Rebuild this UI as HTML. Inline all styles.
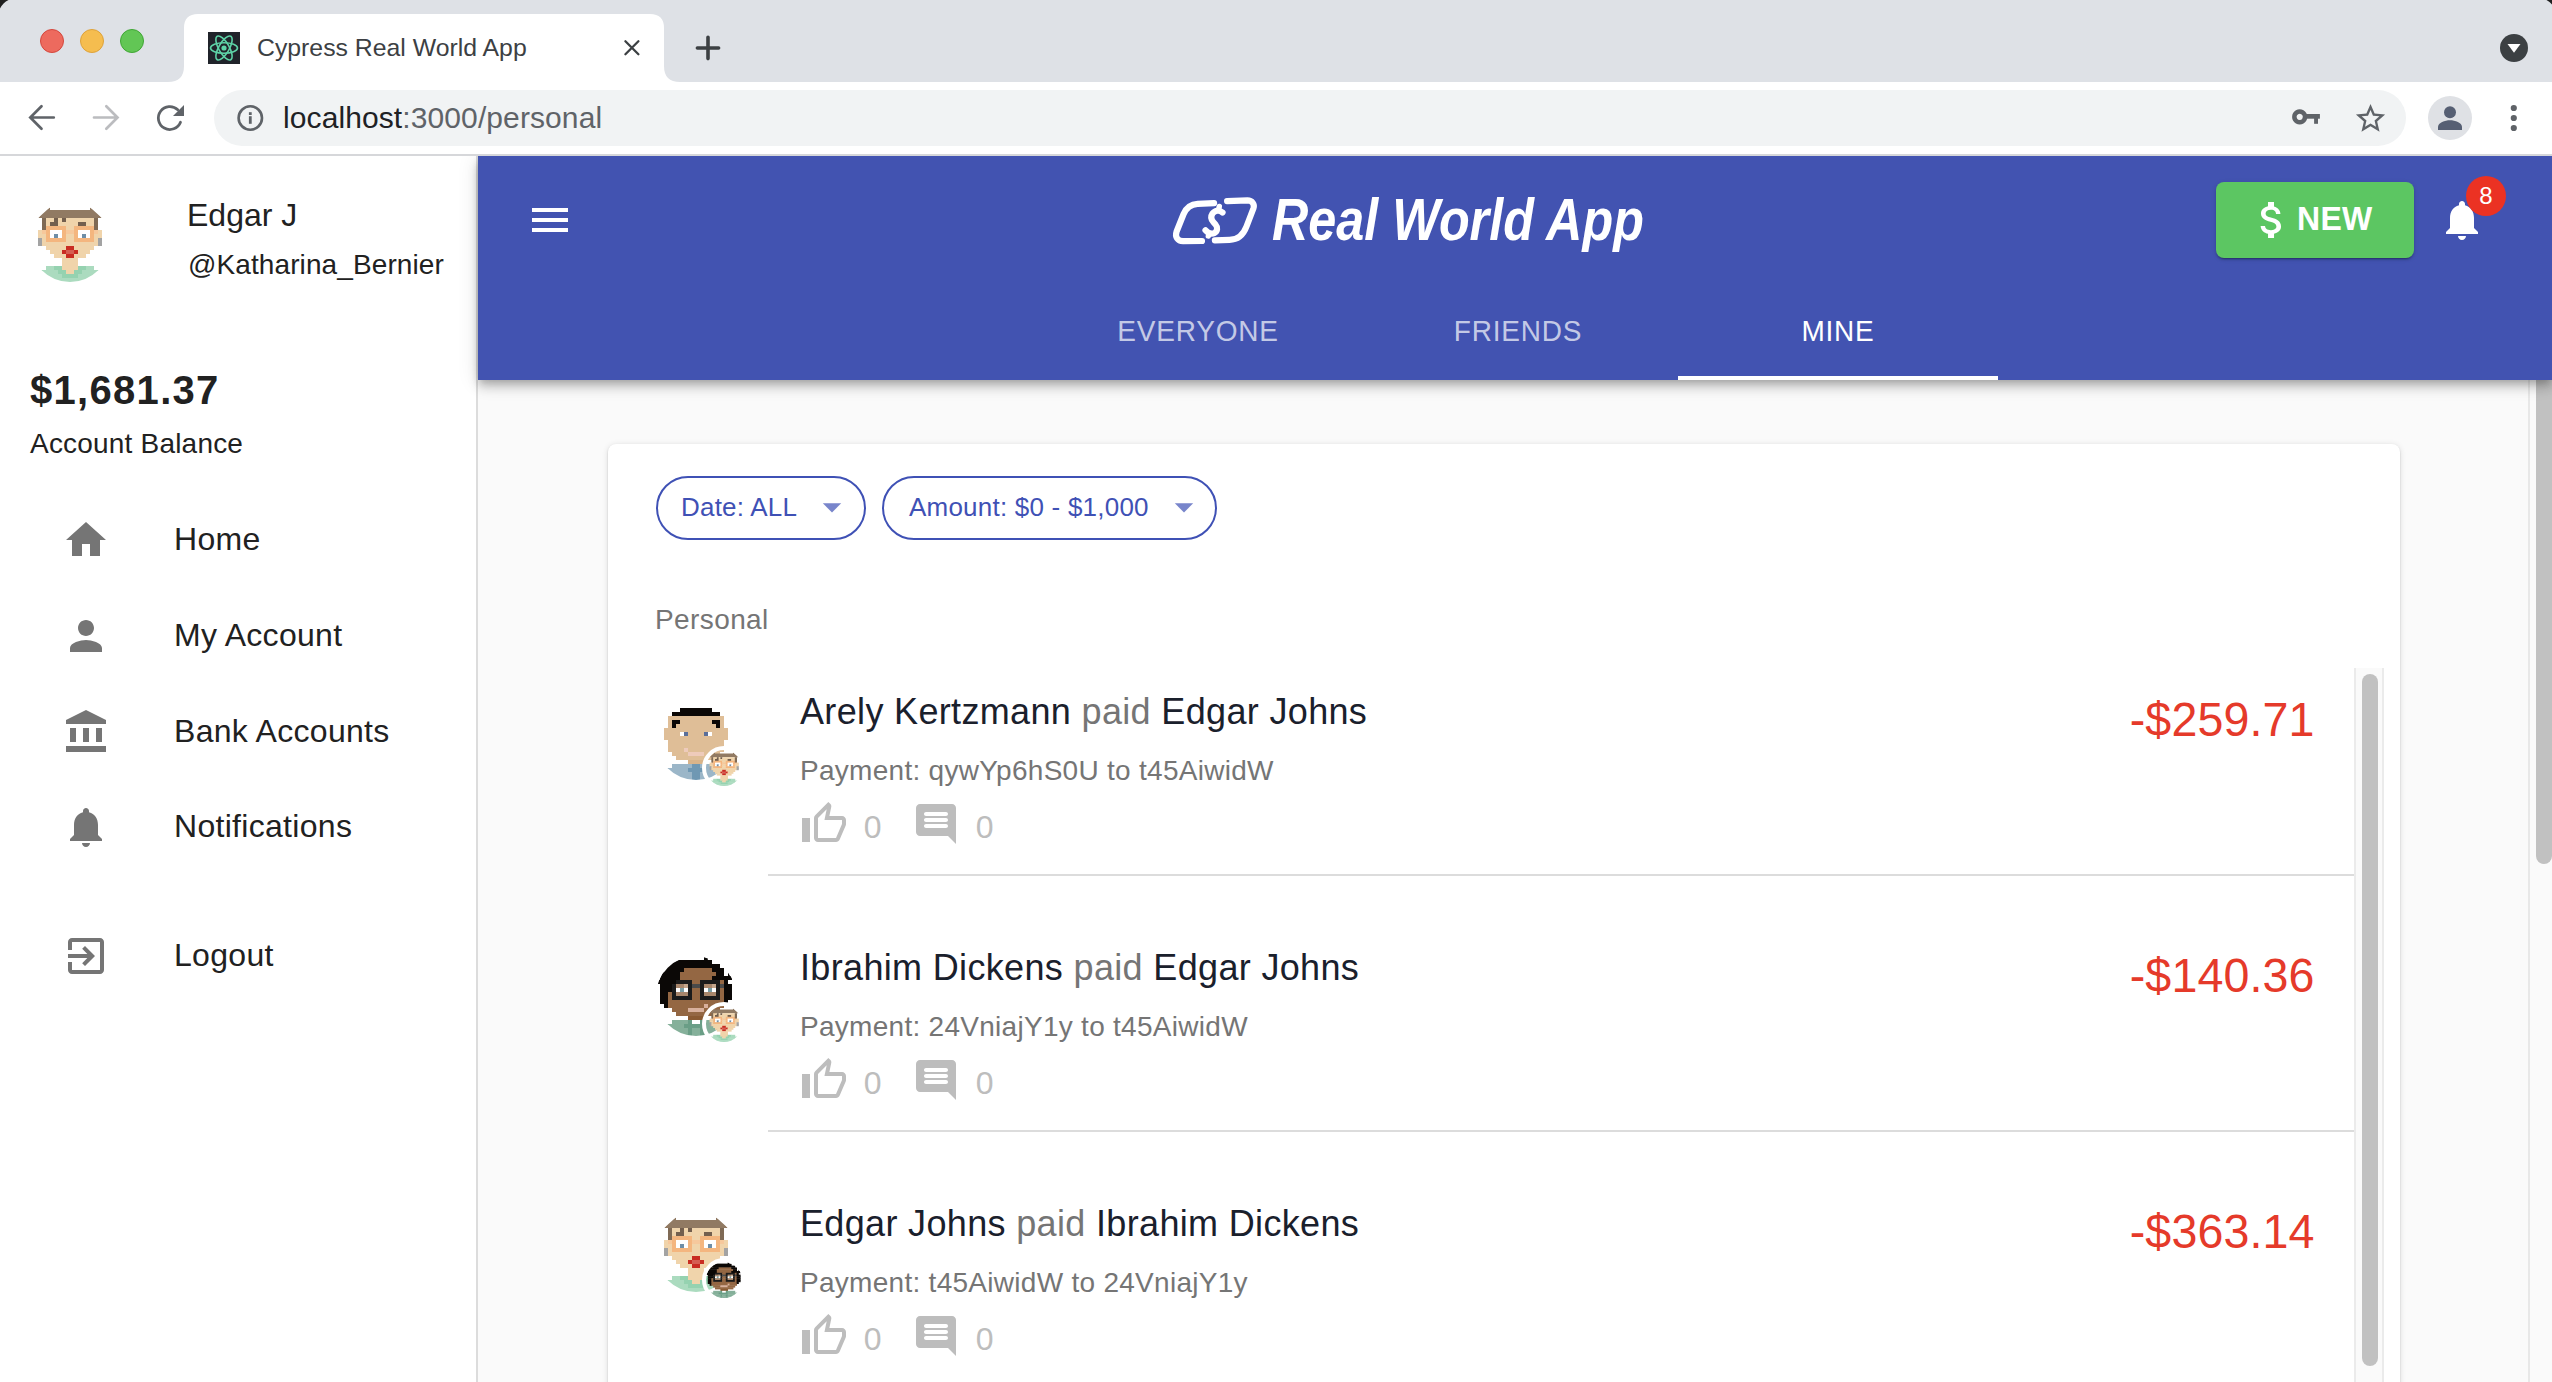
<!DOCTYPE html>
<html><head><meta charset="utf-8">
<style>
*{box-sizing:border-box;margin:0;padding:0}
html,body{width:2552px;height:1382px;overflow:hidden;background:#fafafa;font-family:"Liberation Sans",sans-serif}
.a{position:absolute}
svg{display:block}
/* chrome */
#tabstrip{left:0;top:0;width:2552px;height:82px;background:#dee1e6}
#toolbar{left:0;top:82px;width:2552px;height:72px;background:#fff}
#sep{left:0;top:154px;width:2552px;height:2px;background:#d6d7da}
#omni{left:214px;top:90px;width:2192px;height:56px;border-radius:28px;background:#f1f3f4}
.tl{width:24px;height:24px;border-radius:50%;top:29px}
#tabtitle{left:257px;top:29px;font-size:24.8px;color:#3c4043;line-height:38px;white-space:nowrap}
#url{left:283px;top:98px;font-size:30px;line-height:40px;color:#202124;white-space:nowrap;letter-spacing:0.1px}
#url span{color:#5f6368}
/* sidebar */
#side{left:0;top:156px;width:478px;height:1226px;background:#fff}
#sideb{left:476px;top:156px;width:2px;height:1226px;background:#dcdcdc}
#sideshadow{left:446px;top:156px;width:30px;height:1226px;background:linear-gradient(to right,rgba(0,0,0,0),rgba(0,0,0,0.035))}
.txt{white-space:nowrap;color:#212121}
/* appbar */
#appbar{left:478px;top:156px;width:2074px;height:224px;background:#4253b1;box-shadow:0 4px 8px -2px rgba(0,0,0,0.2),0 8px 10px 0 rgba(0,0,0,0.14),0 2px 20px 0 rgba(0,0,0,0.12);clip-path:inset(0 -60px -60px -60px)}
.tab{top:312px;font-size:28px;line-height:40px;letter-spacing:0.8px;white-space:nowrap;text-align:center;width:320px;transform-origin:0 29.7px;transform:scaleY(1.04)}
#main{left:478px;top:380px;width:2074px;height:1002px;background:#fafafa}
#paper{left:608px;top:444px;width:1792px;height:1000px;background:#fff;border-radius:8px;box-shadow:0 2px 2px -1px rgba(0,0,0,0.2),0 1px 2px 0 rgba(0,0,0,0.14),0 1px 6px 0 rgba(0,0,0,0.12)}
.chip{top:476px;height:64px;border:2px solid #3f51b5;border-radius:32px;color:#3f51b5;font-size:26px;line-height:58px;white-space:nowrap;letter-spacing:0.22px}

.nm{font-size:36px;line-height:44px;color:#1a202c;letter-spacing:0.34px;white-space:nowrap}
.nm span{color:#757575}
.pay{font-size:28px;line-height:36px;color:#757575;letter-spacing:0.28px;white-space:nowrap}
.cnt{font-size:32px;line-height:36px;color:#bdbdbd;white-space:nowrap}
.amt{font-size:46.6px;line-height:56px;color:#e53a2a;white-space:nowrap;text-align:right;width:294.5px;letter-spacing:0.1px;transform-origin:0 44.15px;transform:scaleY(1.045)}
.div{height:2px;background:#dcdcdc}
</style></head>
<body>
<!--AVDEFS--><svg width="0" height="0" style="position:absolute"><defs><clipPath id="avclip"><circle cx="40" cy="40" r="40"/></clipPath><symbol id="av-edgar" viewBox="0 0 80 80"><g clip-path="url(#avclip)"><path d="M8 16 L20 5.2 L20 8 L60 8 L60 5.2 L72 16 Z" fill="#917a63"/><rect x="12" y="16" width="4" height="4" fill="#7f6a55"/><rect x="16" y="16" width="8" height="4" fill="#f0d4ab"/><rect x="24" y="16" width="4" height="4" fill="#735f4e"/><rect x="28" y="16" width="4" height="4" fill="#f0d4ab"/><rect x="32" y="16" width="4" height="4" fill="#735f4e"/><rect x="36" y="16" width="28" height="4" fill="#f0d4ab"/><rect x="64" y="16" width="4" height="4" fill="#7f6a55"/><rect x="12" y="20" width="4" height="4" fill="#7f6a55"/><rect x="16" y="20" width="4" height="4" fill="#f0d4ab"/><rect x="20" y="20" width="8" height="4" fill="#735f4e"/><rect x="28" y="20" width="20" height="4" fill="#f0d4ab"/><rect x="48" y="20" width="8" height="4" fill="#735f4e"/><rect x="56" y="20" width="8" height="4" fill="#f0d4ab"/><rect x="64" y="20" width="4" height="4" fill="#7f6a55"/><rect x="12" y="24" width="4" height="4" fill="#7f6a55"/><rect x="16" y="24" width="20" height="4" fill="#f4b67f"/><rect x="36" y="24" width="8" height="4" fill="#f0d4ab"/><rect x="44" y="24" width="20" height="4" fill="#f4b67f"/><rect x="64" y="24" width="4" height="4" fill="#7f6a55"/><rect x="8" y="28" width="4" height="4" fill="#f0d4ab"/><rect x="12" y="28" width="4" height="4" fill="#f6c89c"/><rect x="16" y="28" width="4" height="4" fill="#f4b67f"/><rect x="20" y="28" width="12" height="4" fill="#ffffff"/><rect x="32" y="28" width="4" height="4" fill="#f4b67f"/><rect x="36" y="28" width="8" height="4" fill="#f6c89c"/><rect x="44" y="28" width="4" height="4" fill="#f4b67f"/><rect x="48" y="28" width="12" height="4" fill="#ffffff"/><rect x="60" y="28" width="4" height="4" fill="#f4b67f"/><rect x="64" y="28" width="4" height="4" fill="#f6c89c"/><rect x="68" y="28" width="4" height="4" fill="#f0d4ab"/><rect x="8" y="32" width="8" height="4" fill="#f0d4ab"/><rect x="16" y="32" width="4" height="4" fill="#f4b67f"/><rect x="20" y="32" width="4" height="4" fill="#ffffff"/><rect x="24" y="32" width="4" height="4" fill="#6f8ea6"/><rect x="28" y="32" width="4" height="4" fill="#ffffff"/><rect x="32" y="32" width="4" height="4" fill="#f4b67f"/><rect x="36" y="32" width="8" height="4" fill="#f0d4ab"/><rect x="44" y="32" width="4" height="4" fill="#f4b67f"/><rect x="48" y="32" width="4" height="4" fill="#ffffff"/><rect x="52" y="32" width="4" height="4" fill="#6f8ea6"/><rect x="56" y="32" width="4" height="4" fill="#ffffff"/><rect x="60" y="32" width="4" height="4" fill="#f4b67f"/><rect x="64" y="32" width="8" height="4" fill="#f0d4ab"/><rect x="8" y="36" width="4" height="4" fill="#a3a3a3"/><rect x="12" y="36" width="4" height="4" fill="#f0d4ab"/><rect x="16" y="36" width="20" height="4" fill="#f4b67f"/><rect x="36" y="36" width="8" height="4" fill="#f0d4ab"/><rect x="44" y="36" width="20" height="4" fill="#f4b67f"/><rect x="64" y="36" width="4" height="4" fill="#f0d4ab"/><rect x="68" y="36" width="4" height="4" fill="#a3a3a3"/><rect x="8" y="40" width="4" height="4" fill="#a3a3a3"/><rect x="12" y="40" width="56" height="4" fill="#f0d4ab"/><rect x="68" y="40" width="4" height="4" fill="#a3a3a3"/><rect x="16" y="44" width="20" height="4" fill="#f0d4ab"/><rect x="36" y="44" width="8" height="4" fill="#c92c22"/><rect x="44" y="44" width="20" height="4" fill="#f0d4ab"/><rect x="20" y="48" width="12" height="4" fill="#f0d4ab"/><rect x="32" y="48" width="4" height="4" fill="#c92c22"/><rect x="36" y="48" width="8" height="4" fill="#d55e52"/><rect x="44" y="48" width="4" height="4" fill="#c92c22"/><rect x="48" y="48" width="12" height="4" fill="#f0d4ab"/><rect x="24" y="52" width="12" height="4" fill="#f0d4ab"/><rect x="36" y="52" width="8" height="4" fill="#c92c22"/><rect x="44" y="52" width="12" height="4" fill="#f0d4ab"/><rect x="32" y="56" width="16" height="4" fill="#f0d4ab"/><rect x="32" y="60" width="16" height="4" fill="#f0d4ab"/><rect x="16" y="64" width="8" height="4" fill="#abdbbf"/><rect x="24" y="64" width="8" height="4" fill="#95d2b0"/><rect x="32" y="64" width="16" height="4" fill="#f0d4ab"/><rect x="48" y="64" width="8" height="4" fill="#95d2b0"/><rect x="56" y="64" width="8" height="4" fill="#abdbbf"/><rect x="0" y="68" width="28" height="4" fill="#abdbbf"/><rect x="28" y="68" width="8" height="4" fill="#95d2b0"/><rect x="36" y="68" width="8" height="4" fill="#f0d4ab"/><rect x="44" y="68" width="8" height="4" fill="#95d2b0"/><rect x="52" y="68" width="28" height="4" fill="#abdbbf"/><rect x="0" y="72" width="32" height="4" fill="#abdbbf"/><rect x="32" y="72" width="16" height="4" fill="#95d2b0"/><rect x="48" y="72" width="32" height="4" fill="#abdbbf"/><rect x="0" y="76" width="80" height="4" fill="#abdbbf"/></g></symbol><symbol id="av-edgar-s" viewBox="0 0 80 80"><g clip-path="url(#avclip)"><path d="M8 16 L20 5.2 L20 8 L60 8 L60 5.2 L72 16 Z" fill="#917a63"/><rect x="12" y="16" width="4.9" height="4.9" fill="#7f6a55"/><rect x="16" y="16" width="8.9" height="4.9" fill="#f0d4ab"/><rect x="24" y="16" width="4.9" height="4.9" fill="#735f4e"/><rect x="28" y="16" width="4.9" height="4.9" fill="#f0d4ab"/><rect x="32" y="16" width="4.9" height="4.9" fill="#735f4e"/><rect x="36" y="16" width="28.9" height="4.9" fill="#f0d4ab"/><rect x="64" y="16" width="4.9" height="4.9" fill="#7f6a55"/><rect x="12" y="20" width="4.9" height="4.9" fill="#7f6a55"/><rect x="16" y="20" width="4.9" height="4.9" fill="#f0d4ab"/><rect x="20" y="20" width="8.9" height="4.9" fill="#735f4e"/><rect x="28" y="20" width="20.9" height="4.9" fill="#f0d4ab"/><rect x="48" y="20" width="8.9" height="4.9" fill="#735f4e"/><rect x="56" y="20" width="8.9" height="4.9" fill="#f0d4ab"/><rect x="64" y="20" width="4.9" height="4.9" fill="#7f6a55"/><rect x="12" y="24" width="4.9" height="4.9" fill="#7f6a55"/><rect x="16" y="24" width="20.9" height="4.9" fill="#f4b67f"/><rect x="36" y="24" width="8.9" height="4.9" fill="#f0d4ab"/><rect x="44" y="24" width="20.9" height="4.9" fill="#f4b67f"/><rect x="64" y="24" width="4.9" height="4.9" fill="#7f6a55"/><rect x="8" y="28" width="4.9" height="4.9" fill="#f0d4ab"/><rect x="12" y="28" width="4.9" height="4.9" fill="#f6c89c"/><rect x="16" y="28" width="4.9" height="4.9" fill="#f4b67f"/><rect x="20" y="28" width="12.9" height="4.9" fill="#ffffff"/><rect x="32" y="28" width="4.9" height="4.9" fill="#f4b67f"/><rect x="36" y="28" width="8.9" height="4.9" fill="#f6c89c"/><rect x="44" y="28" width="4.9" height="4.9" fill="#f4b67f"/><rect x="48" y="28" width="12.9" height="4.9" fill="#ffffff"/><rect x="60" y="28" width="4.9" height="4.9" fill="#f4b67f"/><rect x="64" y="28" width="4.9" height="4.9" fill="#f6c89c"/><rect x="68" y="28" width="4.9" height="4.9" fill="#f0d4ab"/><rect x="8" y="32" width="8.9" height="4.9" fill="#f0d4ab"/><rect x="16" y="32" width="4.9" height="4.9" fill="#f4b67f"/><rect x="20" y="32" width="4.9" height="4.9" fill="#ffffff"/><rect x="24" y="32" width="4.9" height="4.9" fill="#6f8ea6"/><rect x="28" y="32" width="4.9" height="4.9" fill="#ffffff"/><rect x="32" y="32" width="4.9" height="4.9" fill="#f4b67f"/><rect x="36" y="32" width="8.9" height="4.9" fill="#f0d4ab"/><rect x="44" y="32" width="4.9" height="4.9" fill="#f4b67f"/><rect x="48" y="32" width="4.9" height="4.9" fill="#ffffff"/><rect x="52" y="32" width="4.9" height="4.9" fill="#6f8ea6"/><rect x="56" y="32" width="4.9" height="4.9" fill="#ffffff"/><rect x="60" y="32" width="4.9" height="4.9" fill="#f4b67f"/><rect x="64" y="32" width="8.9" height="4.9" fill="#f0d4ab"/><rect x="8" y="36" width="4.9" height="4.9" fill="#a3a3a3"/><rect x="12" y="36" width="4.9" height="4.9" fill="#f0d4ab"/><rect x="16" y="36" width="20.9" height="4.9" fill="#f4b67f"/><rect x="36" y="36" width="8.9" height="4.9" fill="#f0d4ab"/><rect x="44" y="36" width="20.9" height="4.9" fill="#f4b67f"/><rect x="64" y="36" width="4.9" height="4.9" fill="#f0d4ab"/><rect x="68" y="36" width="4.9" height="4.9" fill="#a3a3a3"/><rect x="8" y="40" width="4.9" height="4.9" fill="#a3a3a3"/><rect x="12" y="40" width="56.9" height="4.9" fill="#f0d4ab"/><rect x="68" y="40" width="4.9" height="4.9" fill="#a3a3a3"/><rect x="16" y="44" width="20.9" height="4.9" fill="#f0d4ab"/><rect x="36" y="44" width="8.9" height="4.9" fill="#c92c22"/><rect x="44" y="44" width="20.9" height="4.9" fill="#f0d4ab"/><rect x="20" y="48" width="12.9" height="4.9" fill="#f0d4ab"/><rect x="32" y="48" width="4.9" height="4.9" fill="#c92c22"/><rect x="36" y="48" width="8.9" height="4.9" fill="#d55e52"/><rect x="44" y="48" width="4.9" height="4.9" fill="#c92c22"/><rect x="48" y="48" width="12.9" height="4.9" fill="#f0d4ab"/><rect x="24" y="52" width="12.9" height="4.9" fill="#f0d4ab"/><rect x="36" y="52" width="8.9" height="4.9" fill="#c92c22"/><rect x="44" y="52" width="12.9" height="4.9" fill="#f0d4ab"/><rect x="32" y="56" width="16.9" height="4.9" fill="#f0d4ab"/><rect x="32" y="60" width="16.9" height="4.9" fill="#f0d4ab"/><rect x="16" y="64" width="8.9" height="4.9" fill="#abdbbf"/><rect x="24" y="64" width="8.9" height="4.9" fill="#95d2b0"/><rect x="32" y="64" width="16.9" height="4.9" fill="#f0d4ab"/><rect x="48" y="64" width="8.9" height="4.9" fill="#95d2b0"/><rect x="56" y="64" width="8.9" height="4.9" fill="#abdbbf"/><rect x="0" y="68" width="28.9" height="4.9" fill="#abdbbf"/><rect x="28" y="68" width="8.9" height="4.9" fill="#95d2b0"/><rect x="36" y="68" width="8.9" height="4.9" fill="#f0d4ab"/><rect x="44" y="68" width="8.9" height="4.9" fill="#95d2b0"/><rect x="52" y="68" width="28.9" height="4.9" fill="#abdbbf"/><rect x="0" y="72" width="32.9" height="4.9" fill="#abdbbf"/><rect x="32" y="72" width="16.9" height="4.9" fill="#95d2b0"/><rect x="48" y="72" width="32.9" height="4.9" fill="#abdbbf"/><rect x="0" y="76" width="80.9" height="4.9" fill="#abdbbf"/></g></symbol><symbol id="av-arely" viewBox="0 0 80 80"><g clip-path="url(#avclip)"><rect x="24" y="8" width="32" height="4" fill="#0b0806"/><rect x="16" y="12" width="48" height="4" fill="#0b0806"/><rect x="12" y="16" width="56" height="4" fill="#dfbe97"/><rect x="12" y="20" width="4" height="4" fill="#dfbe97"/><rect x="16" y="20" width="8" height="4" fill="#0b0806"/><rect x="24" y="20" width="32" height="4" fill="#dfbe97"/><rect x="56" y="20" width="8" height="4" fill="#0b0806"/><rect x="64" y="20" width="4" height="4" fill="#dfbe97"/><rect x="12" y="24" width="4" height="4" fill="#dfbe97"/><rect x="16" y="24" width="4" height="4" fill="#0b0806"/><rect x="20" y="24" width="40" height="4" fill="#dfbe97"/><rect x="60" y="24" width="4" height="4" fill="#0b0806"/><rect x="64" y="24" width="4" height="4" fill="#dfbe97"/><rect x="8" y="28" width="64" height="4" fill="#dfbe97"/><rect x="8" y="32" width="16" height="4" fill="#dfbe97"/><rect x="24" y="32" width="4" height="4" fill="#ffffff"/><rect x="28" y="32" width="4" height="4" fill="#5b6f99"/><rect x="32" y="32" width="16" height="4" fill="#dfbe97"/><rect x="48" y="32" width="4" height="4" fill="#5b6f99"/><rect x="52" y="32" width="4" height="4" fill="#ffffff"/><rect x="56" y="32" width="16" height="4" fill="#dfbe97"/><rect x="8" y="36" width="64" height="4" fill="#dfbe97"/><rect x="12" y="40" width="56" height="4" fill="#dfbe97"/><rect x="12" y="44" width="56" height="4" fill="#dfbe97"/><rect x="12" y="48" width="16" height="4" fill="#dfbe97"/><rect x="28" y="48" width="4" height="4" fill="#eecbbb"/><rect x="32" y="48" width="36" height="4" fill="#dfbe97"/><rect x="16" y="52" width="16" height="4" fill="#dfbe97"/><rect x="32" y="52" width="16" height="4" fill="#eecbbb"/><rect x="48" y="52" width="16" height="4" fill="#dfbe97"/><rect x="20" y="56" width="40" height="4" fill="#dfbe97"/><rect x="32" y="60" width="16" height="4" fill="#d9b48a"/><rect x="16" y="64" width="20" height="4" fill="#9bb6c8"/><rect x="36" y="64" width="8" height="4" fill="#6f98b3"/><rect x="44" y="64" width="20" height="4" fill="#9bb6c8"/><rect x="0" y="68" width="32" height="4" fill="#9bb6c8"/><rect x="32" y="68" width="16" height="4" fill="#6f98b3"/><rect x="48" y="68" width="32" height="4" fill="#9bb6c8"/><rect x="0" y="72" width="36" height="4" fill="#9bb6c8"/><rect x="36" y="72" width="8" height="4" fill="#6f98b3"/><rect x="44" y="72" width="36" height="4" fill="#9bb6c8"/><rect x="0" y="76" width="36" height="4" fill="#9bb6c8"/><rect x="36" y="76" width="8" height="4" fill="#6f98b3"/><rect x="44" y="76" width="36" height="4" fill="#9bb6c8"/></g></symbol><symbol id="av-arely-s" viewBox="0 0 80 80"><g clip-path="url(#avclip)"><rect x="24" y="8" width="32.9" height="4.9" fill="#0b0806"/><rect x="16" y="12" width="48.9" height="4.9" fill="#0b0806"/><rect x="12" y="16" width="56.9" height="4.9" fill="#dfbe97"/><rect x="12" y="20" width="4.9" height="4.9" fill="#dfbe97"/><rect x="16" y="20" width="8.9" height="4.9" fill="#0b0806"/><rect x="24" y="20" width="32.9" height="4.9" fill="#dfbe97"/><rect x="56" y="20" width="8.9" height="4.9" fill="#0b0806"/><rect x="64" y="20" width="4.9" height="4.9" fill="#dfbe97"/><rect x="12" y="24" width="4.9" height="4.9" fill="#dfbe97"/><rect x="16" y="24" width="4.9" height="4.9" fill="#0b0806"/><rect x="20" y="24" width="40.9" height="4.9" fill="#dfbe97"/><rect x="60" y="24" width="4.9" height="4.9" fill="#0b0806"/><rect x="64" y="24" width="4.9" height="4.9" fill="#dfbe97"/><rect x="8" y="28" width="64.9" height="4.9" fill="#dfbe97"/><rect x="8" y="32" width="16.9" height="4.9" fill="#dfbe97"/><rect x="24" y="32" width="4.9" height="4.9" fill="#ffffff"/><rect x="28" y="32" width="4.9" height="4.9" fill="#5b6f99"/><rect x="32" y="32" width="16.9" height="4.9" fill="#dfbe97"/><rect x="48" y="32" width="4.9" height="4.9" fill="#5b6f99"/><rect x="52" y="32" width="4.9" height="4.9" fill="#ffffff"/><rect x="56" y="32" width="16.9" height="4.9" fill="#dfbe97"/><rect x="8" y="36" width="64.9" height="4.9" fill="#dfbe97"/><rect x="12" y="40" width="56.9" height="4.9" fill="#dfbe97"/><rect x="12" y="44" width="56.9" height="4.9" fill="#dfbe97"/><rect x="12" y="48" width="16.9" height="4.9" fill="#dfbe97"/><rect x="28" y="48" width="4.9" height="4.9" fill="#eecbbb"/><rect x="32" y="48" width="36.9" height="4.9" fill="#dfbe97"/><rect x="16" y="52" width="16.9" height="4.9" fill="#dfbe97"/><rect x="32" y="52" width="16.9" height="4.9" fill="#eecbbb"/><rect x="48" y="52" width="16.9" height="4.9" fill="#dfbe97"/><rect x="20" y="56" width="40.9" height="4.9" fill="#dfbe97"/><rect x="32" y="60" width="16.9" height="4.9" fill="#d9b48a"/><rect x="16" y="64" width="20.9" height="4.9" fill="#9bb6c8"/><rect x="36" y="64" width="8.9" height="4.9" fill="#6f98b3"/><rect x="44" y="64" width="20.9" height="4.9" fill="#9bb6c8"/><rect x="0" y="68" width="32.9" height="4.9" fill="#9bb6c8"/><rect x="32" y="68" width="16.9" height="4.9" fill="#6f98b3"/><rect x="48" y="68" width="32.9" height="4.9" fill="#9bb6c8"/><rect x="0" y="72" width="36.9" height="4.9" fill="#9bb6c8"/><rect x="36" y="72" width="8.9" height="4.9" fill="#6f98b3"/><rect x="44" y="72" width="36.9" height="4.9" fill="#9bb6c8"/><rect x="0" y="76" width="36.9" height="4.9" fill="#9bb6c8"/><rect x="36" y="76" width="8.9" height="4.9" fill="#6f98b3"/><rect x="44" y="76" width="36.9" height="4.9" fill="#9bb6c8"/></g></symbol><symbol id="av-ibrahim" viewBox="0 0 80 80"><g clip-path="url(#avclip)"><path d="M2 28 Q7 9 22.4 4 L52 4 L52 12 L8 12 L8 28 Z" fill="#0b0806"/><path d="M48 1.2 L51.8 2.4 L51.8 4.5 L48 4.5 Z" fill="#0b0806"/><path d="M72 16.5 L76 23.6 L72 23.6 Z" fill="#0b0806"/><rect x="24" y="4" width="32" height="4" fill="#0b0806"/><rect x="16" y="8" width="48" height="4" fill="#0b0806"/><rect x="8" y="12" width="20" height="4" fill="#0b0806"/><rect x="28" y="12" width="28" height="4" fill="#946743"/><rect x="56" y="12" width="12" height="4" fill="#0b0806"/><rect x="4" y="16" width="20" height="4" fill="#0b0806"/><rect x="24" y="16" width="36" height="4" fill="#946743"/><rect x="60" y="16" width="8" height="4" fill="#0b0806"/><rect x="4" y="20" width="20" height="4" fill="#0b0806"/><rect x="24" y="20" width="32" height="4" fill="#946743"/><rect x="56" y="20" width="20" height="4" fill="#0b0806"/><rect x="0" y="24" width="20" height="4" fill="#0b0806"/><rect x="20" y="24" width="16" height="4" fill="#1b1b1b"/><rect x="36" y="24" width="8" height="4" fill="#946743"/><rect x="44" y="24" width="20" height="4" fill="#1b1b1b"/><rect x="64" y="24" width="4" height="4" fill="#946743"/><rect x="68" y="24" width="4" height="4" fill="#0b0806"/><rect x="4" y="28" width="12" height="4" fill="#0b0806"/><rect x="16" y="28" width="4" height="4" fill="#1b1b1b"/><rect x="20" y="28" width="8" height="4" fill="#a8866b"/><rect x="28" y="28" width="4" height="4" fill="#c4a68c"/><rect x="32" y="28" width="4" height="4" fill="#1b1b1b"/><rect x="36" y="28" width="8" height="4" fill="#4a4a4a"/><rect x="44" y="28" width="4" height="4" fill="#1b1b1b"/><rect x="48" y="28" width="8" height="4" fill="#a8866b"/><rect x="56" y="28" width="4" height="4" fill="#c4a68c"/><rect x="60" y="28" width="4" height="4" fill="#1b1b1b"/><rect x="64" y="28" width="4" height="4" fill="#4a4a4a"/><rect x="68" y="28" width="8" height="4" fill="#0b0806"/><rect x="4" y="32" width="12" height="4" fill="#0b0806"/><rect x="16" y="32" width="4" height="4" fill="#1b1b1b"/><rect x="20" y="32" width="4" height="4" fill="#ffffff"/><rect x="24" y="32" width="4" height="4" fill="#7b9ea5"/><rect x="28" y="32" width="4" height="4" fill="#ffffff"/><rect x="32" y="32" width="4" height="4" fill="#1b1b1b"/><rect x="36" y="32" width="8" height="4" fill="#946743"/><rect x="44" y="32" width="4" height="4" fill="#1b1b1b"/><rect x="48" y="32" width="4" height="4" fill="#ffffff"/><rect x="52" y="32" width="4" height="4" fill="#7b9ea5"/><rect x="56" y="32" width="4" height="4" fill="#ffffff"/><rect x="60" y="32" width="4" height="4" fill="#1b1b1b"/><rect x="64" y="32" width="4" height="4" fill="#946743"/><rect x="68" y="32" width="8" height="4" fill="#0b0806"/><rect x="4" y="36" width="8" height="4" fill="#0b0806"/><rect x="12" y="36" width="4" height="4" fill="#946743"/><rect x="16" y="36" width="4" height="4" fill="#1b1b1b"/><rect x="20" y="36" width="12" height="4" fill="#a8866b"/><rect x="32" y="36" width="4" height="4" fill="#1b1b1b"/><rect x="36" y="36" width="8" height="4" fill="#946743"/><rect x="44" y="36" width="4" height="4" fill="#1b1b1b"/><rect x="48" y="36" width="12" height="4" fill="#a8866b"/><rect x="60" y="36" width="4" height="4" fill="#1b1b1b"/><rect x="64" y="36" width="4" height="4" fill="#946743"/><rect x="68" y="36" width="8" height="4" fill="#0b0806"/><rect x="4" y="40" width="8" height="4" fill="#0b0806"/><rect x="12" y="40" width="4" height="4" fill="#946743"/><rect x="16" y="40" width="20" height="4" fill="#1b1b1b"/><rect x="36" y="40" width="8" height="4" fill="#946743"/><rect x="44" y="40" width="20" height="4" fill="#1b1b1b"/><rect x="64" y="40" width="4" height="4" fill="#946743"/><rect x="68" y="40" width="8" height="4" fill="#0b0806"/><rect x="4" y="44" width="8" height="4" fill="#0b0806"/><rect x="12" y="44" width="56" height="4" fill="#946743"/><rect x="68" y="44" width="4" height="4" fill="#0b0806"/><rect x="8" y="48" width="4" height="4" fill="#0b0806"/><rect x="12" y="48" width="36" height="4" fill="#946743"/><rect x="48" y="48" width="4" height="4" fill="#d8b09c"/><rect x="52" y="48" width="16" height="4" fill="#946743"/><rect x="16" y="52" width="16" height="4" fill="#946743"/><rect x="32" y="52" width="16" height="4" fill="#d8b09c"/><rect x="48" y="52" width="16" height="4" fill="#946743"/><rect x="20" y="56" width="40" height="4" fill="#946743"/><rect x="32" y="60" width="16" height="4" fill="#8a5a32"/><rect x="16" y="64" width="16" height="4" fill="#85b09a"/><rect x="32" y="64" width="4" height="4" fill="#6a9e86"/><rect x="36" y="64" width="8" height="4" fill="#ffffff"/><rect x="44" y="64" width="4" height="4" fill="#6a9e86"/><rect x="48" y="64" width="16" height="4" fill="#85b09a"/><rect x="0" y="68" width="28" height="4" fill="#85b09a"/><rect x="28" y="68" width="20" height="4" fill="#6a9e86"/><rect x="48" y="68" width="32" height="4" fill="#85b09a"/><rect x="0" y="72" width="32" height="4" fill="#85b09a"/><rect x="32" y="72" width="4" height="4" fill="#6a9e86"/><rect x="36" y="72" width="8" height="4" fill="#85b09a"/><rect x="44" y="72" width="4" height="4" fill="#6a9e86"/><rect x="48" y="72" width="32" height="4" fill="#85b09a"/><rect x="0" y="76" width="32" height="4" fill="#85b09a"/><rect x="32" y="76" width="4" height="4" fill="#6a9e86"/><rect x="36" y="76" width="8" height="4" fill="#85b09a"/><rect x="44" y="76" width="4" height="4" fill="#6a9e86"/><rect x="48" y="76" width="32" height="4" fill="#85b09a"/></g></symbol><symbol id="av-ibrahim-s" viewBox="0 0 80 80"><g clip-path="url(#avclip)"><path d="M2 28 Q7 9 22.4 4 L52 4 L52 12 L8 12 L8 28 Z" fill="#0b0806"/><path d="M48 1.2 L51.8 2.4 L51.8 4.5 L48 4.5 Z" fill="#0b0806"/><path d="M72 16.5 L76 23.6 L72 23.6 Z" fill="#0b0806"/><rect x="24" y="4" width="32.9" height="4.9" fill="#0b0806"/><rect x="16" y="8" width="48.9" height="4.9" fill="#0b0806"/><rect x="8" y="12" width="20.9" height="4.9" fill="#0b0806"/><rect x="28" y="12" width="28.9" height="4.9" fill="#946743"/><rect x="56" y="12" width="12.9" height="4.9" fill="#0b0806"/><rect x="4" y="16" width="20.9" height="4.9" fill="#0b0806"/><rect x="24" y="16" width="36.9" height="4.9" fill="#946743"/><rect x="60" y="16" width="8.9" height="4.9" fill="#0b0806"/><rect x="4" y="20" width="20.9" height="4.9" fill="#0b0806"/><rect x="24" y="20" width="32.9" height="4.9" fill="#946743"/><rect x="56" y="20" width="20.9" height="4.9" fill="#0b0806"/><rect x="0" y="24" width="20.9" height="4.9" fill="#0b0806"/><rect x="20" y="24" width="16.9" height="4.9" fill="#1b1b1b"/><rect x="36" y="24" width="8.9" height="4.9" fill="#946743"/><rect x="44" y="24" width="20.9" height="4.9" fill="#1b1b1b"/><rect x="64" y="24" width="4.9" height="4.9" fill="#946743"/><rect x="68" y="24" width="4.9" height="4.9" fill="#0b0806"/><rect x="4" y="28" width="12.9" height="4.9" fill="#0b0806"/><rect x="16" y="28" width="4.9" height="4.9" fill="#1b1b1b"/><rect x="20" y="28" width="8.9" height="4.9" fill="#a8866b"/><rect x="28" y="28" width="4.9" height="4.9" fill="#c4a68c"/><rect x="32" y="28" width="4.9" height="4.9" fill="#1b1b1b"/><rect x="36" y="28" width="8.9" height="4.9" fill="#4a4a4a"/><rect x="44" y="28" width="4.9" height="4.9" fill="#1b1b1b"/><rect x="48" y="28" width="8.9" height="4.9" fill="#a8866b"/><rect x="56" y="28" width="4.9" height="4.9" fill="#c4a68c"/><rect x="60" y="28" width="4.9" height="4.9" fill="#1b1b1b"/><rect x="64" y="28" width="4.9" height="4.9" fill="#4a4a4a"/><rect x="68" y="28" width="8.9" height="4.9" fill="#0b0806"/><rect x="4" y="32" width="12.9" height="4.9" fill="#0b0806"/><rect x="16" y="32" width="4.9" height="4.9" fill="#1b1b1b"/><rect x="20" y="32" width="4.9" height="4.9" fill="#ffffff"/><rect x="24" y="32" width="4.9" height="4.9" fill="#7b9ea5"/><rect x="28" y="32" width="4.9" height="4.9" fill="#ffffff"/><rect x="32" y="32" width="4.9" height="4.9" fill="#1b1b1b"/><rect x="36" y="32" width="8.9" height="4.9" fill="#946743"/><rect x="44" y="32" width="4.9" height="4.9" fill="#1b1b1b"/><rect x="48" y="32" width="4.9" height="4.9" fill="#ffffff"/><rect x="52" y="32" width="4.9" height="4.9" fill="#7b9ea5"/><rect x="56" y="32" width="4.9" height="4.9" fill="#ffffff"/><rect x="60" y="32" width="4.9" height="4.9" fill="#1b1b1b"/><rect x="64" y="32" width="4.9" height="4.9" fill="#946743"/><rect x="68" y="32" width="8.9" height="4.9" fill="#0b0806"/><rect x="4" y="36" width="8.9" height="4.9" fill="#0b0806"/><rect x="12" y="36" width="4.9" height="4.9" fill="#946743"/><rect x="16" y="36" width="4.9" height="4.9" fill="#1b1b1b"/><rect x="20" y="36" width="12.9" height="4.9" fill="#a8866b"/><rect x="32" y="36" width="4.9" height="4.9" fill="#1b1b1b"/><rect x="36" y="36" width="8.9" height="4.9" fill="#946743"/><rect x="44" y="36" width="4.9" height="4.9" fill="#1b1b1b"/><rect x="48" y="36" width="12.9" height="4.9" fill="#a8866b"/><rect x="60" y="36" width="4.9" height="4.9" fill="#1b1b1b"/><rect x="64" y="36" width="4.9" height="4.9" fill="#946743"/><rect x="68" y="36" width="8.9" height="4.9" fill="#0b0806"/><rect x="4" y="40" width="8.9" height="4.9" fill="#0b0806"/><rect x="12" y="40" width="4.9" height="4.9" fill="#946743"/><rect x="16" y="40" width="20.9" height="4.9" fill="#1b1b1b"/><rect x="36" y="40" width="8.9" height="4.9" fill="#946743"/><rect x="44" y="40" width="20.9" height="4.9" fill="#1b1b1b"/><rect x="64" y="40" width="4.9" height="4.9" fill="#946743"/><rect x="68" y="40" width="8.9" height="4.9" fill="#0b0806"/><rect x="4" y="44" width="8.9" height="4.9" fill="#0b0806"/><rect x="12" y="44" width="56.9" height="4.9" fill="#946743"/><rect x="68" y="44" width="4.9" height="4.9" fill="#0b0806"/><rect x="8" y="48" width="4.9" height="4.9" fill="#0b0806"/><rect x="12" y="48" width="36.9" height="4.9" fill="#946743"/><rect x="48" y="48" width="4.9" height="4.9" fill="#d8b09c"/><rect x="52" y="48" width="16.9" height="4.9" fill="#946743"/><rect x="16" y="52" width="16.9" height="4.9" fill="#946743"/><rect x="32" y="52" width="16.9" height="4.9" fill="#d8b09c"/><rect x="48" y="52" width="16.9" height="4.9" fill="#946743"/><rect x="20" y="56" width="40.9" height="4.9" fill="#946743"/><rect x="32" y="60" width="16.9" height="4.9" fill="#8a5a32"/><rect x="16" y="64" width="16.9" height="4.9" fill="#85b09a"/><rect x="32" y="64" width="4.9" height="4.9" fill="#6a9e86"/><rect x="36" y="64" width="8.9" height="4.9" fill="#ffffff"/><rect x="44" y="64" width="4.9" height="4.9" fill="#6a9e86"/><rect x="48" y="64" width="16.9" height="4.9" fill="#85b09a"/><rect x="0" y="68" width="28.9" height="4.9" fill="#85b09a"/><rect x="28" y="68" width="20.9" height="4.9" fill="#6a9e86"/><rect x="48" y="68" width="32.9" height="4.9" fill="#85b09a"/><rect x="0" y="72" width="32.9" height="4.9" fill="#85b09a"/><rect x="32" y="72" width="4.9" height="4.9" fill="#6a9e86"/><rect x="36" y="72" width="8.9" height="4.9" fill="#85b09a"/><rect x="44" y="72" width="4.9" height="4.9" fill="#6a9e86"/><rect x="48" y="72" width="32.9" height="4.9" fill="#85b09a"/><rect x="0" y="76" width="32.9" height="4.9" fill="#85b09a"/><rect x="32" y="76" width="4.9" height="4.9" fill="#6a9e86"/><rect x="36" y="76" width="8.9" height="4.9" fill="#85b09a"/><rect x="44" y="76" width="4.9" height="4.9" fill="#6a9e86"/><rect x="48" y="76" width="32.9" height="4.9" fill="#85b09a"/></g></symbol></defs></svg><!--/AVDEFS-->
<!-- ============ BROWSER CHROME ============ -->
<div class="a" id="tabstrip"></div>
<div class="a" id="toolbar"></div>
<div class="a" id="sep"></div>
<div class="a" id="omni"></div>
<div class="a tl" style="left:40px;background:#ed6a5e;border:1px solid #d4473d"></div>
<div class="a tl" style="left:80px;background:#f5bd4f;border:1px solid #dea23a"></div>
<div class="a tl" style="left:120px;background:#62c655;border:1px solid #40a635"></div>
<!-- active tab -->
<svg class="a" style="left:160px;top:0" width="540" height="82" viewBox="0 0 540 82">
  <path d="M8 82 Q24 82 24 66 L24 28 Q24 14 38 14 L490 14 Q504 14 504 28 L504 66 Q504 82 520 82 Z" fill="#fff"/>
</svg>

<div class="a" id="tabtitle">Cypress Real World App</div>
<!-- favicon -->
<svg class="a" style="left:208px;top:32px" width="32" height="32" viewBox="0 0 32 32">
  <rect width="32" height="32" fill="#20232a"/>
  <g fill="none" stroke="#5ed3a7" stroke-width="1.6" transform="translate(16 16)">
    <ellipse rx="13.5" ry="5.2"/>
    <ellipse rx="13.5" ry="5.2" transform="rotate(60)"/>
    <ellipse rx="13.5" ry="5.2" transform="rotate(120)"/>
  </g>
  <circle cx="16" cy="16" r="2.6" fill="#5ed3a7"/>
</svg>
<!-- tab close -->
<svg class="a" style="left:620px;top:36px" width="24" height="24" viewBox="0 0 24 24">
  <path d="M5.4 5.3 L18.4 18.3 M18.4 5.3 L5.4 18.3" stroke="#3c4043" stroke-width="2.3" stroke-linecap="round"/>
</svg>
<!-- new tab plus -->
<svg class="a" style="left:692px;top:32px" width="32" height="32" viewBox="0 0 32 32">
  <path d="M16 5.2 V26.6 M5.4 16 H26.6" stroke="#3c4043" stroke-width="3.6" stroke-linecap="round"/>
</svg>
<!-- dropdown circle -->
<svg class="a" style="left:2499px;top:34px" width="30" height="30" viewBox="0 0 30 30">
  <circle cx="15" cy="14" r="14" fill="#3c4043"/>
  <path d="M8.5 10 H21.5 L15 18.8 Z" fill="#fff"/>
</svg>
<!-- window corners -->
<svg class="a" style="left:0;top:0" width="12" height="12" viewBox="0 0 12 12"><path d="M0 0 H8.5 A20 20 0 0 0 0 8.5 Z" fill="#1f1f1f"/></svg>
<svg class="a" style="left:2540px;top:0" width="12" height="12" viewBox="0 0 12 12"><path d="M12 0 H6.5 A16 16 0 0 1 12 4.6 Z" fill="#1f1f1f"/></svg>
<!-- nav icons -->
<svg class="a" style="left:20px;top:95px" width="180" height="45" viewBox="20 95 180 45">
  <path d="M41.5 106.3 L30.3 117.5 L41.5 128.7 M30.5 117.5 H53.8" fill="none" stroke="#5f6368" stroke-width="2.7" stroke-linecap="round" stroke-linejoin="miter"/>
  <path d="M106.3 106.3 L117.5 117.5 L106.3 128.7 M117.3 117.5 H94" fill="none" stroke="#bbbcbf" stroke-width="2.7" stroke-linecap="round" stroke-linejoin="miter"/>
  <path d="M180.5 122.2 A11.47 11.47 0 1 1 177.77 109.75" fill="none" stroke="#5f6368" stroke-width="2.8" stroke-linecap="round"/>
  <path d="M184 105 V116 H173 Z" fill="#5f6368"/>
</svg>
<!-- info icon -->
<svg class="a" style="left:236px;top:104px" width="28" height="28" viewBox="0 0 28 28">
  <circle cx="14.3" cy="14" r="11.7" fill="none" stroke="#5f6368" stroke-width="2.6"/>
  <rect x="12.9" y="12.2" width="2.8" height="7.6" fill="#5f6368"/>
  <rect x="12.9" y="8.2" width="2.8" height="2.8" fill="#5f6368"/>
</svg>
<div class="a" id="url">localhost<span>:3000/personal</span></div>
<!-- key -->
<svg class="a" style="left:2280px;top:95px" width="50" height="40" viewBox="2280 95 50 40">
  <path fill-rule="evenodd" fill="#5f6368" d="M2299.7 109.3 A7.6 7.6 0 1 1 2299.69 109.3 Z M2299.7 113.8 A3.1 3.1 0 1 0 2299.71 113.8 Z"/>
  <rect x="2305" y="114" width="14.9" height="4.7" fill="#5f6368"/>
  <rect x="2314.1" y="118" width="3.9" height="5.8" fill="#5f6368"/>
</svg>
<!-- star -->
<svg class="a" style="left:2352.5px;top:101.3px" width="35.04" height="35.04" viewBox="0 0 24 24">
  <path fill="#5f6368" d="M22 9.24l-7.19-.62L12 2 9.19 8.63 2 9.24l5.46 4.73L5.82 21 12 17.27 18.18 21l-1.63-7.03L22 9.24zM12 15.4l-3.76 2.27 1-4.28-3.32-2.88 4.38-.38L12 6.1l1.71 4.04 4.38.38-3.32 2.88 1 4.28L12 15.4z"/>
</svg>
<!-- profile -->
<svg class="a" style="left:2428px;top:96px" width="44" height="44" viewBox="0 0 44 44">
  <circle cx="22" cy="22" r="22" fill="#dfe1e5"/>
  <circle cx="22" cy="16.2" r="6" fill="#565f73"/>
  <path d="M10 34 V31 C10 26.5 17 24.2 22 24.2 C27 24.2 34 26.5 34 31 V34 Z" fill="#565f73"/>
</svg>
<!-- kebab -->
<svg class="a" style="left:2504px;top:100px" width="20" height="36" viewBox="0 0 20 36">
  <circle cx="9.8" cy="8" r="3.1" fill="#5f6368"/>
  <circle cx="9.8" cy="18" r="3.1" fill="#5f6368"/>
  <circle cx="9.8" cy="28" r="3.1" fill="#5f6368"/>
</svg>

<!-- ============ SIDEBAR ============ -->
<div class="a" id="side"></div>
<div class="a" id="sideb"></div>
<svg class="a" style="left:30px;top:202px" width="80" height="80"><use href="#av-edgar"/></svg>
<div class="a txt" style="left:187px;top:195px;font-size:32px;line-height:40px">Edgar J</div>
<div class="a txt" style="left:188px;top:247px;font-size:28px;line-height:36px;letter-spacing:0.1px">@Katharina_Bernier</div>
<div class="a txt" style="left:30px;top:366px;font-size:40px;line-height:48px;font-weight:bold;letter-spacing:1.3px;transform-origin:0 37.86px;transform:scaleY(1.03)">$1,681.37</div>
<div class="a txt" style="left:30px;top:426px;font-size:28px;line-height:36px;letter-spacing:0.2px">Account Balance</div>
<svg class="a" style="left:62px;top:516px" width="48" height="48" viewBox="0 0 24 24"><path fill="#757575" d="M10 20v-6h4v6h5v-8h3L12 3 2 12h3v8z"/></svg>
<svg class="a" style="left:62px;top:612px" width="48" height="48" viewBox="0 0 24 24"><path fill="#757575" d="M12 12c2.21 0 4-1.79 4-4s-1.79-4-4-4-4 1.79-4 4 1.79 4 4 4zm0 2c-2.67 0-8 1.34-8 4v2h16v-2c0-2.66-5.33-4-8-4z"/></svg>
<svg class="a" style="left:62px;top:708px" width="48" height="48" viewBox="0 0 24 24"><path fill="#757575" d="M4 10h3v7H4zM10.5 10h3v7h-3zM2 19h20v3H2zM17 10h3v7h-3zM12 1L2 6v2h20V6z"/></svg>
<svg class="a" style="left:62px;top:803px" width="48" height="48" viewBox="0 0 24 24"><path fill="#757575" d="M12 22c1.1 0 2-.9 2-2h-4c0 1.1.89 2 2 2zm6-6v-5c0-3.07-1.64-5.64-4.5-6.32V4c0-.83-.67-1.5-1.5-1.5s-1.5.67-1.5 1.5v.68C7.63 5.36 6 7.92 6 11v5l-2 2v1h16v-1l-2-2z"/></svg>
<svg class="a" style="left:62px;top:932px" width="48" height="48" viewBox="0 0 24 24"><path fill="#757575" d="M10.09 15.59L11.5 17l5-5-5-5-1.41 1.41L12.67 11H3v2h9.67l-2.58 2.59zM19 3H5c-1.11 0-2 .9-2 2v4h2V5h14v14H5v-4H3v4c0 1.1.89 2 2 2h14c1.1 0 2-.9 2-2V5c0-1.1-.9-2-2-2z"/></svg>
<div class="a txt" style="left:174px;top:519px;font-size:32px;line-height:40px;letter-spacing:0.3px">Home</div>
<div class="a txt" style="left:174px;top:615px;font-size:32px;line-height:40px;letter-spacing:0.3px">My Account</div>
<div class="a txt" style="left:174px;top:711px;font-size:32px;line-height:40px;letter-spacing:0.3px">Bank Accounts</div>
<div class="a txt" style="left:174px;top:806px;font-size:32px;line-height:40px;letter-spacing:0.3px">Notifications</div>
<div class="a txt" style="left:174px;top:935px;font-size:32px;line-height:40px;letter-spacing:0.3px">Logout</div>

<!-- ============ MAIN ============ -->
<div class="a" id="main"></div>
<div class="a" id="paper"></div>

<div class="a chip" style="left:656px;width:210px;padding-left:23px">Date: ALL</div>
<svg class="a" style="left:810px;top:485px" width="44" height="44" viewBox="0 0 24 24"><path fill="rgba(63,81,181,0.7)" d="M7 10l5 5 5-5z"/></svg>
<div class="a chip" style="left:882px;width:335px;padding-left:25px">Amount: $0 - $1,000</div>
<svg class="a" style="left:1162px;top:485px" width="44" height="44" viewBox="0 0 24 24"><path fill="rgba(63,81,181,0.7)" d="M7 10l5 5 5-5z"/></svg>
<div class="a" style="left:655px;top:602px;font-size:28px;line-height:36px;color:#757575;letter-spacing:0.4px">Personal</div>

<svg class="a" style="left:656px;top:700px" width="80" height="80"><use href="#av-arely"/></svg>
<div class="a" style="left:702px;top:746px;width:44px;height:44px;border-radius:22px;border:4px solid #fff"></div>
<svg class="a" style="left:706px;top:750px" width="36" height="36" viewBox="0 0 80 80"><use href="#av-edgar-s"/></svg>
<div class="a nm" style="left:800px;top:690.0px">Arely Kertzmann <span>paid</span> Edgar Johns</div>
<div class="a pay" style="left:800px;top:753.0px">Payment: qywYp6hS0U to t45AiwidW</div>
<svg class="a" style="left:800px;top:800px" width="48" height="48" viewBox="0 0 24 24"><path fill="#bdbdbd" d="M21 8h-6.31l.95-4.57.03-.32c0-.41-.17-.79-.44-1.06L14.17 1 7.59 7.59C7.22 7.95 7 8.45 7 9v10c0 1.1.9 2 2 2h9c.83 0 1.54-.5 1.84-1.22l3.02-7.05c.09-.23.14-.47.14-.73v-2c0-1.1-.9-2-2-2zm0 4l-3 7H9V9l4.34-4.34L12.23 10H21v2zM1 9h4v12H1z"/></svg>
<div class="a cnt" style="left:863.8px;top:809px">0</div>
<svg class="a" style="left:912px;top:800px" width="48" height="48" viewBox="0 0 24 24"><path fill="#bdbdbd" d="M22 4c0-1.1-.9-2-2-2H4c-1.1 0-2 .9-2 2v12c0 1.1.9 2 2 2h14l4 4V4zm-5 10H7c-.55 0-1-.45-1-1s.45-1 1-1h10c.55 0 1 .45 1 1s-.45 1-1 1zm0-3H7c-.55 0-1-.45-1-1s.45-1 1-1h10c.55 0 1 .45 1 1s-.45 1-1 1zm0-3H7c-.55 0-1-.45-1-1s.45-1 1-1h10c.55 0 1 .45 1 1s-.45 1-1 1z"/></svg>
<div class="a cnt" style="left:975.8px;top:809px">0</div>
<div class="a amt" style="left:2020px;top:691.8px">-$259.71</div>
<div class="a div" style="left:768px;top:874px;width:1587px"></div>

<svg class="a" style="left:656px;top:956px" width="80" height="80"><use href="#av-ibrahim"/></svg>
<div class="a" style="left:702px;top:1002px;width:44px;height:44px;border-radius:22px;border:4px solid #fff"></div>
<svg class="a" style="left:706px;top:1006px" width="36" height="36" viewBox="0 0 80 80"><use href="#av-edgar-s"/></svg>
<div class="a nm" style="left:800px;top:946.0px">Ibrahim Dickens <span>paid</span> Edgar Johns</div>
<div class="a pay" style="left:800px;top:1009.0px">Payment: 24VniajY1y to t45AiwidW</div>
<svg class="a" style="left:800px;top:1056px" width="48" height="48" viewBox="0 0 24 24"><path fill="#bdbdbd" d="M21 8h-6.31l.95-4.57.03-.32c0-.41-.17-.79-.44-1.06L14.17 1 7.59 7.59C7.22 7.95 7 8.45 7 9v10c0 1.1.9 2 2 2h9c.83 0 1.54-.5 1.84-1.22l3.02-7.05c.09-.23.14-.47.14-.73v-2c0-1.1-.9-2-2-2zm0 4l-3 7H9V9l4.34-4.34L12.23 10H21v2zM1 9h4v12H1z"/></svg>
<div class="a cnt" style="left:863.8px;top:1065px">0</div>
<svg class="a" style="left:912px;top:1056px" width="48" height="48" viewBox="0 0 24 24"><path fill="#bdbdbd" d="M22 4c0-1.1-.9-2-2-2H4c-1.1 0-2 .9-2 2v12c0 1.1.9 2 2 2h14l4 4V4zm-5 10H7c-.55 0-1-.45-1-1s.45-1 1-1h10c.55 0 1 .45 1 1s-.45 1-1 1zm0-3H7c-.55 0-1-.45-1-1s.45-1 1-1h10c.55 0 1 .45 1 1s-.45 1-1 1zm0-3H7c-.55 0-1-.45-1-1s.45-1 1-1h10c.55 0 1 .45 1 1s-.45 1-1 1z"/></svg>
<div class="a cnt" style="left:975.8px;top:1065px">0</div>
<div class="a amt" style="left:2020px;top:947.8px">-$140.36</div>
<div class="a div" style="left:768px;top:1130px;width:1587px"></div>

<svg class="a" style="left:656px;top:1212px" width="80" height="80"><use href="#av-edgar"/></svg>
<div class="a" style="left:702px;top:1258px;width:44px;height:44px;border-radius:22px;border:4px solid #fff"></div>
<svg class="a" style="left:706px;top:1262px" width="36" height="36" viewBox="0 0 80 80"><use href="#av-ibrahim-s"/></svg>
<div class="a nm" style="left:800px;top:1202.0px">Edgar Johns <span>paid</span> Ibrahim Dickens</div>
<div class="a pay" style="left:800px;top:1265.0px">Payment: t45AiwidW to 24VniajY1y</div>
<svg class="a" style="left:800px;top:1312px" width="48" height="48" viewBox="0 0 24 24"><path fill="#bdbdbd" d="M21 8h-6.31l.95-4.57.03-.32c0-.41-.17-.79-.44-1.06L14.17 1 7.59 7.59C7.22 7.95 7 8.45 7 9v10c0 1.1.9 2 2 2h9c.83 0 1.54-.5 1.84-1.22l3.02-7.05c.09-.23.14-.47.14-.73v-2c0-1.1-.9-2-2-2zm0 4l-3 7H9V9l4.34-4.34L12.23 10H21v2zM1 9h4v12H1z"/></svg>
<div class="a cnt" style="left:863.8px;top:1321px">0</div>
<svg class="a" style="left:912px;top:1312px" width="48" height="48" viewBox="0 0 24 24"><path fill="#bdbdbd" d="M22 4c0-1.1-.9-2-2-2H4c-1.1 0-2 .9-2 2v12c0 1.1.9 2 2 2h14l4 4V4zm-5 10H7c-.55 0-1-.45-1-1s.45-1 1-1h10c.55 0 1 .45 1 1s-.45 1-1 1zm0-3H7c-.55 0-1-.45-1-1s.45-1 1-1h10c.55 0 1 .45 1 1s-.45 1-1 1zm0-3H7c-.55 0-1-.45-1-1s.45-1 1-1h10c.55 0 1 .45 1 1s-.45 1-1 1z"/></svg>
<div class="a cnt" style="left:975.8px;top:1321px">0</div>
<div class="a amt" style="left:2020px;top:1203.8px">-$363.14</div>
<div class="a div" style="left:768px;top:1386px;width:1587px"></div>

<!-- inner scrollbar -->
<div class="a" style="left:2354px;top:668px;width:30px;height:714px;background:#fafafa;border-left:2px solid #ebebeb;border-right:2px solid #ebebeb"></div>
<div class="a" style="left:2362px;top:674px;width:16px;height:692px;border-radius:8px;background:#c1c1c1"></div>
<!-- page scrollbar -->
<div class="a" style="left:2528px;top:156px;width:24px;height:1226px;background:#fafafa;border-left:2px solid #e8e8e8"></div>
<div class="a" style="left:2536px;top:156px;width:16px;height:708px;border-radius:0 0 8px 8px;background:#c1c1c1"></div>

<!-- ============ APP BAR ============ -->
<div class="a" id="appbar"></div>
<svg class="a" style="left:526px;top:196px" width="48" height="48" viewBox="0 0 24 24"><path fill="#fff" d="M3 18h18v-2H3v2zm0-5h18v-2H3v2zm0-7v2h18V6H3z"/></svg>
<svg class="a" style="left:1165px;top:190px" width="100" height="60" viewBox="0 0 100 60">
  <g fill="none" stroke="#fff" stroke-width="6.2" stroke-linecap="round" stroke-linejoin="round">
    <path d="M49.1 13.2 L32.6 13.9 C25 14.3 21 18.5 18.6 24 L11.6 41.5 C9.8 46.8 12.6 51.2 18 51.2 L37 51"/>
    <path d="M62.1 11.1 L82.5 10.4 C87 10.4 90 14 88.4 18.5 L81.5 36.5 C78.5 44.5 73 49.8 64.5 49.9 L49.9 50.4"/>
    <path d="M57.5 22.5 C55 20 50 20 47.5 23.5 C45.5 26.5 46 29.5 48.5 32.3 L50.5 34.5 C53 37.3 52.5 41.5 49.5 43 C46.5 44.5 43 43 40.5 40.2"/>
    <path d="M54.3 16.5 L53.6 19.5 M43.4 46 L44.2 43.5" stroke-width="5.5"/>
  </g>
</svg>
<div class="a" style="left:1272px;top:186px;font-size:59px;line-height:68px;font-weight:bold;font-style:italic;color:#fff;white-space:nowrap;transform-origin:0 0;transform:scaleX(0.853)">Real World App</div>
<div class="a tab" style="left:1038px;color:rgba(255,255,255,0.7)">EVERYONE</div>
<div class="a tab" style="left:1358px;color:rgba(255,255,255,0.7)">FRIENDS</div>
<div class="a tab" style="left:1678px;color:#fff">MINE</div>
<div class="a" style="left:1678px;top:376px;width:320px;height:4px;background:#fff"></div>
<div class="a" style="left:2216px;top:182px;width:198px;height:76px;border-radius:8px;background:#5cc662;box-shadow:0 3px 1px -2px rgba(0,0,0,0.2),0 2px 2px 0 rgba(0,0,0,0.14),0 1px 5px 0 rgba(0,0,0,0.12)"></div>
<svg class="a" style="left:2248px;top:196px" width="48" height="48" viewBox="0 0 24 24"><path fill="#fff" d="M11.8 10.9c-2.27-.59-3-1.2-3-2.15 0-1.090 1.01-1.850 2.7-1.850 1.78 0 2.44.85 2.5 2.1h2.21c-.07-1.72-1.12-3.3-3.21-3.81V3h-3v2.16c-1.94.42-3.5 1.68-3.5 3.61 0 2.31 1.91 3.46 4.7 4.13 2.5.6 3 1.48 3 2.41 0 .69-.49 1.79-2.7 1.79-2.06 0-2.87-.92-2.98-2.1h-2.2c.12 2.19 1.76 3.5 3.7 3.91V21h3v-2.15c1.95-.37 3.5-1.5 3.5-3.55 0-2.84-2.43-3.81-4.7-4.4z"/></svg>
<div class="a" style="left:2297px;top:199px;font-size:32px;line-height:40px;font-weight:bold;color:#fff;white-space:nowrap;letter-spacing:0.3px;transform-origin:0 31.09px;transform:scaleY(1.04)">NEW</div>
<svg class="a" style="left:2438px;top:196px" width="48" height="48" viewBox="0 0 24 24"><path fill="#fff" d="M12 22c1.1 0 2-.9 2-2h-4c0 1.1.89 2 2 2zm6-6v-5c0-3.07-1.64-5.64-4.5-6.32V4c0-.83-.67-1.5-1.5-1.5s-1.5.67-1.5 1.5v.68C7.63 5.36 6 7.92 6 11v5l-2 2v1h16v-1l-2-2z"/></svg>
<div class="a" style="left:2466px;top:176px;width:40px;height:40px;border-radius:20px;background:#eb3223;color:#fff;font-size:24px;line-height:40px;text-align:center">8</div>
</body></html>
